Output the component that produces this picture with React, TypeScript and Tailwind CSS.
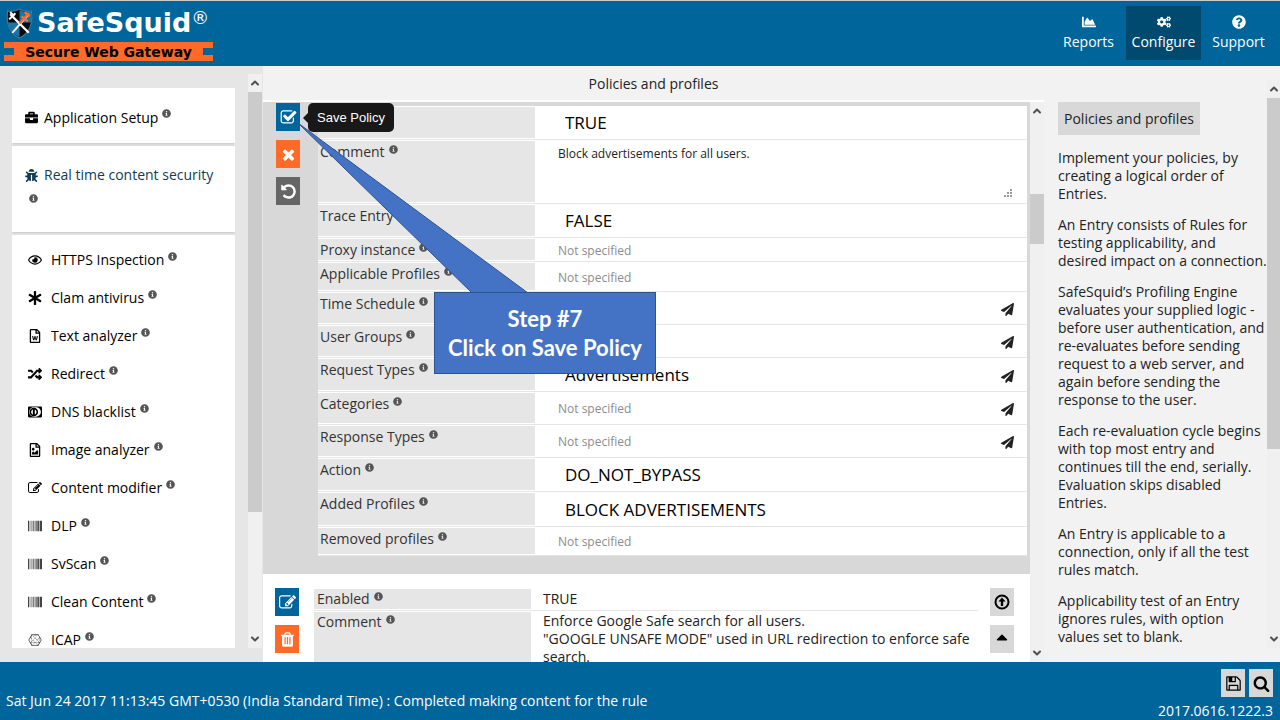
import type { ComponentType, ReactNode } from "react";
import {
  FaAsterisk,
  FaBarcode,
  FaBriefcase,
  FaBug,
  FaCaretUp,
  FaCcDinersClub,
  FaChartArea,
  FaCogs,
  FaConnectdevelop,
  FaInfoCircle,
  FaPaperPlane,
  FaQuestionCircle,
  FaRandom,
  FaRegEye,
  FaRegFileImage,
  FaRegFileWord,
} from "react-icons/fa";
import { ChevronDown, ChevronUp } from "lucide-react";

type IconProps = { className?: string };

const paths = {
  edit: "M888 1184l116-116-152-152-116 116v56h96v96h56zm440-720q-16-16-33 1l-350 350q-17 17-1 33t33-1l350-350q17-17 1-33zm80 594v190q0 119-84.5 203.5t-203.5 84.5h-832q-119 0-203.5-84.5t-84.5-203.5v-832q0-119 84.5-203.5t203.5-84.5h832q63 0 117 25 15 7 18 23 3 17-9 29l-49 49q-14 14-32 8-23-6-45-6h-832q-66 0-113 47t-47 113v832q0 66 47 113t113 47h832q66 0 113-47t47-113v-126q0-13 9-22l64-64q15-15 35-7t20 29zm-96-738l288 288-672 672h-288v-288zm444 132l-92 92-288-288 92-92q28-28 68-28t68 28l152 152q28 28 28 68t-28 68z",
  check: "M1472 930v318q0 119-84.5 203.5t-203.5 84.5h-832q-119 0-203.5-84.5t-84.5-203.5v-832q0-119 84.5-203.5t203.5-84.5h832q63 0 117 25 15 7 18 23 3 17-9 29l-49 49q-10 10-23 10-3 0-9-2-23-6-45-6h-832q-66 0-113 47t-47 113v832q0 66 47 113t113 47h832q66 0 113-47t47-113v-254q0-13 9-22l64-64q10-10 23-10 6 0 12 3 20 8 20 29zm231-489l-814 814q-24 24-57 24t-57-24l-430-430q-24-24-24-57t24-57l110-110q24-24 57-24t57 24l263 263 647-647q24-24 57-24t57 24l110 110q24 24 24 57t-24 57z",
  times: "M1490 1322q0 40-28 68l-136 136q-28 28-68 28t-68-28l-294-294-294 294q-28 28-68 28t-68-28l-136-136q-28-28-28-68t28-68l294-294-294-294q-28-28-28-68t28-68l136-136q28-28 68-28t68 28l294 294 294-294q28-28 68-28t68 28l136 136q28 28 28 68t-28 68l-294 294 294 294q28 28 28 68z",
  undo: "M1664 896q0 156-61 298t-164 245-245 164-298 61q-172 0-327-72.5t-264-204.5q-7-10-6.5-22.5t8.5-20.5l137-138q10-9 25-9 16 2 23 12 73 95 179 147t225 52q104 0 198.5-40.5t163.5-109.5 109.5-163.5 40.5-198.5-40.5-198.5-109.5-163.5-163.5-109.5-198.5-40.5q-98 0-188 35.5t-160 101.5l137 138q31 30 14 69-17 40-59 40h-448q-26 0-45-19t-19-45v-448q0-42 40-59 39-17 69 14l130 129q107-101 244.5-156.5t284.5-55.5q156 0 298 61t245 164 164 245 61 298z",
  trash: "M704 1376v-704q0-14-9-23t-23-9h-64q-14 0-23 9t-9 23v704q0 14 9 23t23 9h64q14 0 23-9t9-23zm256 0v-704q0-14-9-23t-23-9h-64q-14 0-23 9t-9 23v704q0 14 9 23t23 9h64q14 0 23-9t9-23zm256 0v-704q0-14-9-23t-23-9h-64q-14 0-23 9t-9 23v704q0 14 9 23t23 9h64q14 0 23-9t9-23zm-544-992h448l-48-117q-7-9-17-11h-317q-10 2-17 11zm928 32v64q0 14-9 23t-23 9h-96v948q0 83-47 143.5t-113 60.5h-832q-66 0-113-58.5t-47-141.5v-952h-96q-14 0-23-9t-9-23v-64q0-14 9-23t23-9h309l70-167q15-37 54-63t79-26h320q40 0 79 26t54 63l70 167h309q14 0 23 9t9 23z",
  save: "M512 1536h768v-384h-768v384zm896 0h128v-896q0-14-10-38.5t-20-34.5l-281-281q-10-10-34-20t-39-10v416q0 40-28 68t-68 28h-576q-40 0-68-28t-28-68v-416h-128v1280h128v-416q0-40 28-68t68-28h832q40 0 68 28t28 68v416zm-384-928v-320q0-13-9.5-22.5t-22.5-9.5h-192q-13 0-22.5 9.5t-9.5 22.5v320q0 13 9.5 22.5t22.5 9.5h192q13 0 22.5-9.5t9.5-22.5zm640 32v928q0 40-28 68t-68 28h-1344q-40 0-68-28t-28-68v-1344q0-40 28-68t68-28h928q40 0 88 20t76 48l280 280q28 28 48 76t20 88z",
  search: "M1216 832q0-185-131.5-316.5t-316.5-131.5-316.5 131.5-131.5 316.5 131.5 316.5 316.5 131.5 316.5-131.5 131.5-316.5zm512 832q0 52-38 90t-90 38q-54 0-90-38l-343-342q-179 124-399 124-143 0-273.5-55.5t-225-150-150-225-55.5-273.5 55.5-273.5 150-225 225-150 273.5-55.5 273.5 55.5 225 150 150 225 55.5 273.5q0 220-124 399l343 343q37 37 37 90z",
};

function Glyph({ name, className }: { name: keyof typeof paths; className?: string }) {
  return (
    <svg viewBox="0 0 1792 1792" fill="currentColor" className={className} aria-hidden="true">
      <path d={paths[name]} />
    </svg>
  );
}

function EditIcon({ className }: IconProps) {
  return <Glyph name="edit" className={className} />;
}

function CircleUp({ className }: IconProps) {
  return (
    <svg viewBox="0 0 16 16" className={className} aria-hidden="true">
      <circle cx="8" cy="8" r="6.5" fill="none" stroke="currentColor" strokeWidth="2" />
      <path d="M8 3.6 11.6 7.4H9.2V12H6.8V7.4H4.4Z" fill="currentColor" />
    </svg>
  );
}

function Shield() {
  return (
    <svg viewBox="0 0 26 30" className="h-[31px] w-[27px] shrink-0" aria-hidden="true">
      <path d="M1.5 3Q8 4 13 1Q18 4 24.5 3Q27 22 13 29Q-1 22 1.5 3Z" fill="#0b0b0b" stroke="#4d7d99" />
      <path d="M13 2Q18 4.5 24 3.5Q25 9 24.4 14H13Z" fill="#1c75a6" />
      <path d="M1.6 14H13V28.3Q3 23 1.6 14Z" fill="#1c75a6" />
      <path d="M4 6 22 24" stroke="#fff" strokeWidth="2.2" />
      <path d="M3 11 9 5M4 4 8 8" stroke="#fff" strokeWidth="2" />
      <path d="M22 6 6 24" stroke="#fff" strokeWidth="1.8" />
      <path d="M22 5 13 15M15 8 21 13M18 4 23 8" stroke="#ff6a28" strokeWidth="2.2" />
    </svg>
  );
}

function Info() {
  return <FaInfoCircle className="ml-1 inline size-[9px] shrink-0 -translate-y-1 text-[#555]" aria-label="info" />;
}

function ScrollTrack({ thumb }: { thumb: string }) {
  return (
    <div className="flex w-[14px] shrink-0 flex-col bg-[#f0f0f0] text-[#505050]" aria-hidden="true">
      <ChevronUp className="mx-auto h-[18px] w-3" strokeWidth={4} />
      <div className="min-h-0 grow">
        <div className={thumb} />
      </div>
      <ChevronDown className="mx-auto h-[18px] w-3" strokeWidth={4} />
    </div>
  );
}

function TopLink({ icon: Icon, label, active }: { icon: ComponentType<IconProps>; label: string; active?: boolean }) {
  return (
    <a
      href="#"
      className={
        active
          ? "flex h-[54px] w-[75px] flex-col items-center bg-[#004a70] pt-[9px]"
          : "flex h-[54px] w-[75px] flex-col items-center pt-[9px]"
      }
    >
      <Icon className="size-[14px]" />
      <span className="mt-[3px] leading-5">{label}</span>
    </a>
  );
}

const modules: { icon: ComponentType<IconProps>; label: string }[] = [
  { icon: FaRegEye, label: "HTTPS Inspection" },
  { icon: FaAsterisk, label: "Clam antivirus" },
  { icon: FaRegFileWord, label: "Text analyzer" },
  { icon: FaRandom, label: "Redirect" },
  { icon: FaCcDinersClub, label: "DNS blacklist" },
  { icon: FaRegFileImage, label: "Image analyzer" },
  { icon: EditIcon, label: "Content modifier" },
  { icon: FaBarcode, label: "DLP" },
  { icon: FaBarcode, label: "SvScan" },
  { icon: FaBarcode, label: "Clean Content" },
  { icon: FaConnectdevelop, label: "ICAP" },
];

const help = [
  ["Implement your policies, by", "creating a logical order of", "Entries."],
  ["An Entry consists of Rules for", "testing applicability, and", "desired impact on a connection."],
  [
    "SafeSquid’s Profiling Engine",
    "evaluates your supplied logic -",
    "before user authentication, and",
    "re-evaluates before sending",
    "request to a web server, and",
    "again before sending the",
    "response to the user.",
  ],
  [
    "Each re-evaluation cycle begins",
    "with top most entry and",
    "continues till the end, serially.",
    "Evaluation skips disabled",
    "Entries.",
  ],
  ["An Entry is applicable to a", "connection, only if all the test", "rules match."],
  ["Applicability test of an Entry", "ignores rules, with option", "values set to blank."],
];

function Field({
  id,
  label,
  height,
  info = true,
  send,
  children,
}: {
  id: string;
  label?: string;
  height: string;
  info?: boolean;
  send?: boolean;
  children: ReactNode;
}) {
  return (
    <div className={`flex border-b border-[#e6e6e6] bg-white py-px ${height}`}>
      <label htmlFor={id} className="w-[217px] shrink-0 bg-[#e6e6e6] pl-[2px] leading-[22px] text-[#333]">
        {label}
        {info && <Info />}
      </label>
      <div className="flex min-w-0 grow items-center pt-[2px]">{children}</div>
      {send && (
        <button type="button" aria-label={`Apply ${label}`} className="mr-[13px] self-center pt-[3px]">
          <FaPaperPlane className="size-[13px]" />
        </button>
      )}
    </div>
  );
}

function Choice({ id, value, name }: { id: string; value: string; name?: string }) {
  return (
    <select
      id={id}
      aria-label={name}
      defaultValue={value}
      className="w-full appearance-none bg-transparent pl-[30px] text-[17px] text-black"
    >
      <option>{value}</option>
    </select>
  );
}

function Entry({ id, value }: { id: string; value?: string }) {
  return (
    <input
      id={id}
      type="text"
      defaultValue={value}
      placeholder="Not specified"
      className={
        value
          ? "w-full bg-transparent pl-[30px] text-[17px] text-black"
          : "w-full bg-transparent pl-[23px] text-xs placeholder:text-[#8c8c8c]"
      }
    />
  );
}

function SideButton({ label, color, children }: { label: string; color: string; children: ReactNode }) {
  return (
    <button type="button" aria-label={label} className={`flex h-7 w-6 items-center justify-center ${color}`}>
      {children}
    </button>
  );
}

export default function App() {
  return (
    <div className="flex h-screen flex-col overflow-hidden bg-[#f2f2f2] font-['Open_Sans',sans-serif] text-sm text-[#222]">
      <header className="flex h-[66px] shrink-0 justify-between border-t border-[#ccc] bg-[#00659a] text-white">
        <a href="#" className="flex w-[214px] flex-col pt-[7px] pl-1 font-['DejaVu_Sans',sans-serif] font-bold">
          <span className="flex h-[34px] items-start gap-1 pl-[2px] text-[27px] leading-[30px]">
            <Shield />
            <span>
              SafeSquid<sup className="-top-2 text-lg leading-none font-normal">®</sup>
            </span>
          </span>
          <span className="relative flex h-[19px] w-[209px] shrink-0 items-center justify-center bg-[#ff6a28] text-sm text-black">
            <span className="absolute top-[6px] left-0 h-[7px] w-[10px] bg-[#00659a]" />
            Secure Web Gateway
            <span className="absolute top-[6px] right-0 h-[7px] w-[10px] bg-[#00659a]" />
          </span>
        </a>
        <nav className="flex pt-[5px] pr-1">
          <TopLink icon={FaChartArea} label="Reports" />
          <TopLink icon={FaCogs} label="Configure" active />
          <TopLink icon={FaQuestionCircle} label="Support" />
        </nav>
      </header>

      <div className="flex min-h-0 grow">
        <aside className="flex w-[263px] shrink-0 justify-between bg-[#e6e6e6] pt-2 pr-px pb-[14px] pl-3">
          <nav className="mt-[14px] flex w-[223px] flex-col gap-[3px] overflow-hidden text-black">
            <a href="#" className="flex h-[55px] shrink-0 items-center bg-white pl-[13px] pt-1 shadow">
              <FaBriefcase className="mr-[6px] size-[13px]" />
              Application Setup
              <Info />
            </a>
            <a href="#" className="h-[86px] shrink-0 bg-white pt-4 pl-[13px] leading-[26px] text-[#123c55] shadow">
              <FaBug className="mr-[6px] inline size-[13px] -translate-y-px" />
              Real time content security
              <br />
              <Info />
            </a>
            <ul className="min-h-0 grow overflow-hidden bg-white pt-[6px]">
              {modules.map(({ icon: Icon, label }) => (
                <li key={label}>
                  <a href="#" className="flex h-[38px] items-center pl-4">
                    <Icon className="mr-[9px] size-[14px]" />
                    {label}
                    <Info />
                  </a>
                </li>
              ))}
            </ul>
          </nav>
          <ScrollTrack thumb="h-[78%] bg-[#cbcbcb]" />
        </aside>

        <main className="flex min-w-0 grow flex-col">
          <h1 className="h-9 shrink-0 border-b-2 border-white pt-2 text-center">Policies and profiles</h1>
          <div className="flex min-h-0 grow">
            <div className="relative min-w-0 grow overflow-hidden bg-white">
              <form className="flex bg-[#d8d8d8] pt-1 pr-[3px] pb-[18px] pl-[13px]">
                <div className="-mt-[3px] flex w-[42px] shrink-0 flex-col gap-[9px] text-white">
                  <SideButton label="Save Policy" color="bg-[#00659a]">
                    <Glyph name="check" className="size-[17px]" />
                  </SideButton>
                  <SideButton label="Cancel" color="bg-[#ff6a28]">
                    <Glyph name="times" className="size-[17px]" />
                  </SideButton>
                  <SideButton label="Reset" color="bg-[#666]">
                    <Glyph name="undo" className="size-[17px]" />
                  </SideButton>
                </div>
                <div className="min-w-0 grow">
                  <Field id="enabled" height="h-[34px]" info={false}>
                    <Choice id="enabled" name="Enabled" value="TRUE" />
                  </Field>
                  <Field id="comment" label="Comment" height="h-[64px]">
                    <div className="relative h-full w-full pr-[13px]">
                      <textarea
                        id="comment"
                        defaultValue="Block advertisements for all users."
                        className="h-full w-full resize-none bg-transparent pt-[3px] pl-[23px] text-xs text-[#222]"
                      />
                      <svg viewBox="0 0 9 9" className="absolute right-[14px] bottom-1 size-[9px]" fill="#999" aria-hidden="true">
                        <path d="M6 0h2v2h-2zM3 3h2v2h-2zM6 3h2v2h-2zM0 6h2v2h-2zM3 6h2v2h-2zM6 6h2v2h-2z" />
                      </svg>
                    </div>
                  </Field>
                  <Field id="trace" label="Trace Entry" height="h-[34px]" info={false}>
                    <Choice id="trace" value="FALSE" />
                  </Field>
                  <Field id="proxy" label="Proxy instance" height="h-[24px]">
                    <Entry id="proxy" />
                  </Field>
                  <Field id="applicable" label="Applicable Profiles" height="h-[30px]">
                    <Entry id="applicable" />
                  </Field>
                  <Field id="schedule" label="Time Schedule" height="h-[33px]" send>
                    <Entry id="schedule" />
                  </Field>
                  <Field id="groups" label="User Groups" height="h-[33px]" send>
                    <Entry id="groups" />
                  </Field>
                  <Field id="request" label="Request Types" height="h-[34px]" send>
                    <Entry id="request" value="Advertisements" />
                  </Field>
                  <Field id="categories" label="Categories" height="h-[33px]" send>
                    <Entry id="categories" />
                  </Field>
                  <Field id="response" label="Response Types" height="h-[33px]" send>
                    <Entry id="response" />
                  </Field>
                  <Field id="action" label="Action" height="h-[34px]">
                    <Choice id="action" value="DO_NOT_BYPASS" />
                  </Field>
                  <Field id="added" label="Added Profiles" height="h-[35px]">
                    <Entry id="added" value="BLOCK ADVERTISEMENTS" />
                  </Field>
                  <Field id="removed" label="Removed profiles" height="h-[29px]">
                    <Entry id="removed" />
                  </Field>
                </div>
              </form>

              <section className="flex pt-[14px] pr-4 pl-3">
                <div className="flex w-[39px] shrink-0 flex-col gap-[9px] text-white">
                  <SideButton label="Edit" color="bg-[#00659a]">
                    <Glyph name="edit" className="size-[17px]" />
                  </SideButton>
                  <SideButton label="Delete" color="bg-[#ff6a28]">
                    <Glyph name="trash" className="size-[17px]" />
                  </SideButton>
                </div>
                <dl className="min-w-0 grow">
                  <div className="flex border-b border-[#e6e6e6] pt-px pb-px">
                    <dt className="w-[217px] shrink-0 bg-[#e6e6e6] pl-[3px] leading-5 text-[#333]">
                      Enabled
                      <Info />
                    </dt>
                    <dd className="pl-3 leading-5">TRUE</dd>
                  </div>
                  <div className="flex pt-px">
                    <dt className="h-[72px] w-[217px] shrink-0 bg-[#e6e6e6] pl-[3px] leading-5 text-[#333]">
                      Comment
                      <Info />
                    </dt>
                    <dd className="pl-3 leading-[18px] whitespace-nowrap">
                      Enforce Google Safe search for all users.
                      <br />
                      "GOOGLE UNSAFE MODE" used in URL redirection to enforce safe
                      <br />
                      search.
                    </dd>
                  </div>
                </dl>
                <div className="ml-3 flex flex-col gap-[9px] text-black">
                  <SideButton label="Move to top" color="bg-[#d8d8d8]">
                    <CircleUp className="size-4" />
                  </SideButton>
                  <SideButton label="Move up" color="bg-[#d8d8d8]">
                    <FaCaretUp className="mb-1 size-[18px]" />
                  </SideButton>
                </div>
              </section>

              <div role="tooltip" className="absolute top-px left-[40px] flex items-center">
                <span className="border-y-[5px] border-r-[5px] border-y-transparent border-r-[#181818]" />
                <span className="rounded-[5px] bg-[#181818] px-[9px] py-[5px] font-['Liberation_Sans',sans-serif] text-[13px] leading-[19px] text-white">
                  Save Policy
                </span>
              </div>
              <svg viewBox="0 0 230 170" className="absolute top-[21px] left-[35px] h-[170px] w-[230px]" aria-hidden="true">
                <path d="M0 0 174 170H230Z" fill="#4472c4" stroke="#2f528f" />
              </svg>
              <div className="absolute top-[190px] left-[171px] flex h-[82px] w-[222px] flex-col items-center justify-center border border-[#2f528f] bg-[#4472c4] font-['Lato',sans-serif] text-[22px] leading-[29px] font-bold text-white">
                <span>Step #7</span>
                <span>Click on Save Policy</span>
              </div>
            </div>
            <ScrollTrack thumb="mt-[74px] h-[50px] bg-[#cbcbcb]" />
          </div>
        </main>

        <aside className="flex w-[236px] shrink-0 justify-between pt-[14px] pb-[14px] pl-[14px]">
          <div className="shrink-0 pt-[22px] whitespace-nowrap text-[#222]">
            <h2 className="w-fit bg-[#d8d8d8] px-[6px] leading-[33px]">Policies and profiles</h2>
            <div className="mt-[14px] flex flex-col gap-[13px] leading-[18px]">
              {help.map((lines) => (
                <p key={lines[0]}>
                  {lines.map((line) => (
                    <span key={line} className="block">
                      {line}
                    </span>
                  ))}
                </p>
              ))}
            </div>
          </div>
          <ScrollTrack thumb="h-[66%] bg-[#cbcbcb]" />
        </aside>
      </div>

      <footer className="flex h-[58px] shrink-0 justify-between bg-[#00659a] pr-[7px] pl-[6px] text-white">
        <p className="pt-[29px] leading-5">
          Sat Jun 24 2017 11:13:45 GMT+0530 (India Standard Time) : Completed making content for the rule
        </p>
        <div className="flex flex-col items-end pt-[7px]">
          <div className="flex gap-1 text-black">
            <SideButton label="Save" color="bg-[#d8d8d8]">
              <Glyph name="save" className="size-[17px]" />
            </SideButton>
            <SideButton label="Search" color="bg-[#d8d8d8]">
              <Glyph name="search" className="size-[17px]" />
            </SideButton>
          </div>
          <span className="mt-[5px] leading-[18px]">2017.0616.1222.3</span>
        </div>
      </footer>
    </div>
  );
}
